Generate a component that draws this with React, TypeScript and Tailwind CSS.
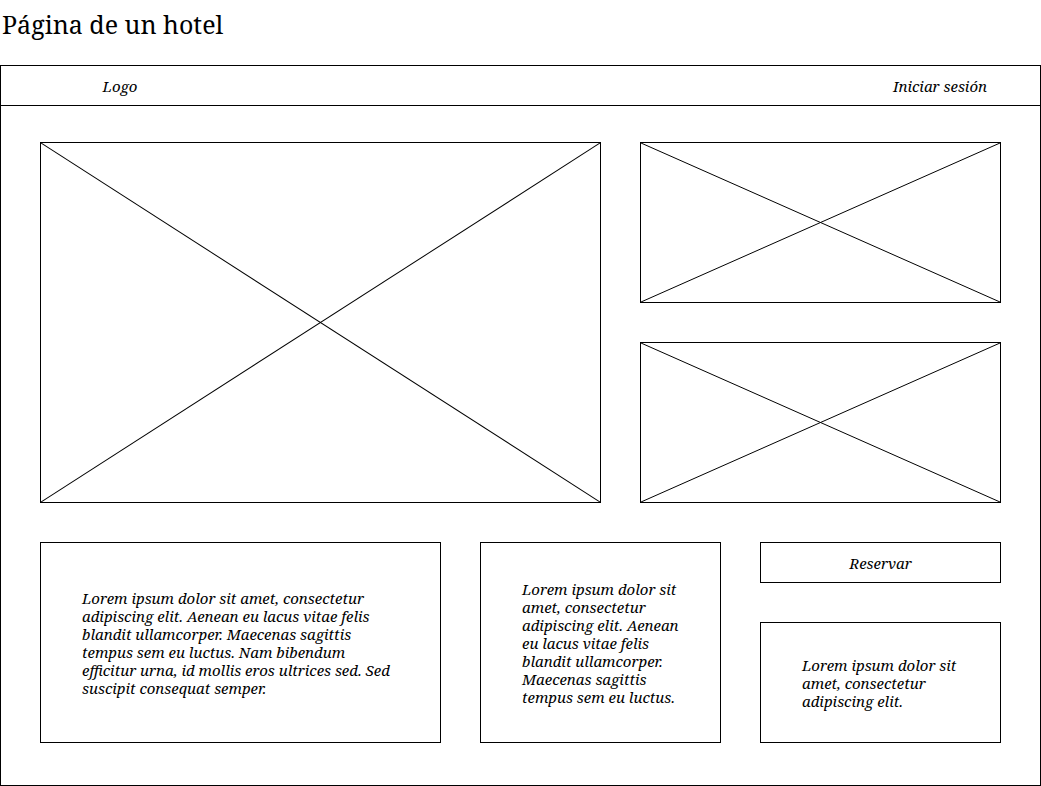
function Placeholder({ className }: { className: string }) {
  return (
    <div className={`border border-black relative ${className}`}>
      <svg className="absolute inset-0 w-full h-full" preserveAspectRatio="none" viewBox="0 0 100 100">
        <line x1="0" y1="0" x2="100" y2="100" stroke="black" strokeWidth="1" vectorEffect="non-scaling-stroke" />
        <line x1="100" y1="0" x2="0" y2="100" stroke="black" strokeWidth="1" vectorEffect="non-scaling-stroke" />
      </svg>
    </div>
  );
}

const serif = "font-['Noto_Serif','DejaVu_Serif',serif]";

export default function App() {
  return (
    <div className={`bg-white text-black w-[1041px] h-[786px] ${serif}`}>
      <h1 className="text-[25px] leading-[48px] pl-[2px] h-[65px]">Página de un hotel</h1>

      <div className="border border-black h-[721px]">
        {/* Header */}
        <div className="h-[40px] pt-[2px] border-b border-black flex items-center justify-between italic text-[15px]">
          <span className="w-[238px] text-center">Logo</span>
          <span className="w-[200px] text-center">Iniciar sesión</span>
        </div>

        <div className="px-[39px] pt-[36px] flex flex-col gap-[39px]">
          {/* Images */}
          <div className="flex gap-[39px]">
            <Placeholder className="w-[561px] h-[361px]" />
            <div className="flex flex-col gap-[39px]">
              <Placeholder className="w-[361px] h-[161px]" />
              <Placeholder className="w-[361px] h-[161px]" />
            </div>
          </div>

          {/* Text blocks */}
          <div className="flex gap-[39px] italic text-[15px] leading-[18px]">
            <div className="w-[401px] h-[201px] border border-black flex items-center px-[41px]">
              <p>
                Lorem ipsum dolor sit amet, consectetur adipiscing elit. Aenean eu lacus vitae felis blandit
                ullamcorper. Maecenas sagittis tempus sem eu luctus. Nam bibendum efficitur urna, id mollis eros
                ultrices sed. Sed suscipit consequat semper.
              </p>
            </div>
            <div className="w-[241px] h-[201px] border border-black flex items-center px-[41px]">
              <p>
                Lorem ipsum dolor sit amet, consectetur adipiscing elit. Aenean eu lacus vitae felis blandit
                ullamcorper. Maecenas sagittis tempus sem eu luctus.
              </p>
            </div>
            <div className="w-[241px] flex flex-col gap-[39px]">
              <button className="h-[41px] border border-black text-center italic">Reservar</button>
              <div className="h-[121px] border border-black flex items-center px-[41px]">
                <p>Lorem ipsum dolor sit amet, consectetur adipiscing elit.</p>
              </div>
            </div>
          </div>
        </div>
      </div>
    </div>
  );
}
